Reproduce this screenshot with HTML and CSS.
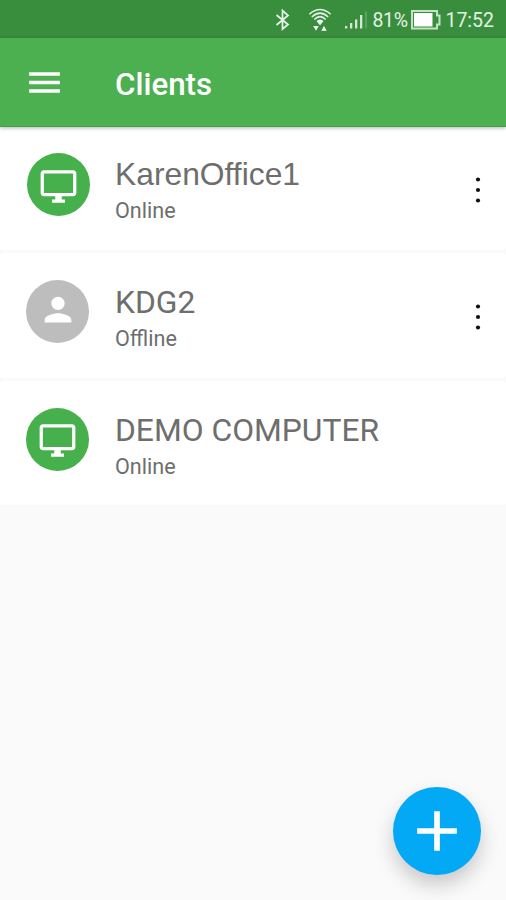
FILE: index.html
```
<!DOCTYPE html>
<html lang="en">
  <head>
    <meta charset="UTF-8" />
    <meta name="viewport" content="width=device-width, initial-scale=1.0" />
    <title>Clients</title>
    <link rel="stylesheet" href="styles.css">
  </head>
  <body>
    <div class="status-bar">
      <svg class="bluetooth" width="16" height="22" viewBox="0 0 16 22">
        <path d="M1.5 6 L13 15.5 L7.5 20 V1.5 L13 6.5 L1.5 16" />
      </svg>
      <svg class="wifi" width="24" height="24" viewBox="0 0 24 24">
        <path d="M1.3 6.3 Q12 -3.3 22.7 6.3 M3.8 9 Q12 1.3 20.2 9 M6.3 11.5 Q12 5.8 17.7 11.5" />
        <path class="solid" d="M8.5 13 Q12 10 15.5 13 L12 17.3 Z M5.3 18 H10.7 L8 22.8 Z M13.3 22.8 H18.7 L16 18 Z" />
      </svg>
      <svg class="signal" width="24" height="20" viewBox="0 0 24 20">
        <path d="M1 16h2.3v2.5H1z M6 13h2.3v5.5H6z M11 9.5h2.3v9H11z M16 5h2.3v13.5H16z" />
        <path class="empty" d="M21 1.5h2v17h-2z" />
      </svg>
      <span class="percent">81%</span>
      <svg class="battery" width="30" height="20" viewBox="0 0 30 20">
        <path class="frame" d="M1 1h25v4.5h2.5v9h-2.5V18.5H1z" />
        <path class="charge" d="M3 3h18.5v13.5H3z" />
      </svg>
      <span class="time">17:52</span>
    </div>

    <header class="app-bar">
      <svg class="menu" width="41" height="41" viewBox="0 0 24 24">
        <path d="M3 18h18v-2H3v2zm0-5h18v-2H3v2zm0-7v2h18V6H3z" />
      </svg>
      <h1>Clients</h1>
    </header>

    <main class="client-list">
      <div class="client first">
        <div class="avatar online">
          <svg width="39" height="39" viewBox="0 0 24 24">
            <path d="M21 2H3c-1.1 0-2 .9-2 2v12c0 1.1.9 2 2 2h7v2H8v2h8v-2h-2v-2h7c1.1 0 2-.9 2-2V4c0-1.1-.9-2-2-2zm0 14H3V4h18v12z" />
          </svg>
        </div>
        <div class="info">
          <div class="name">KarenOffice1</div>
          <div class="status">Online</div>
        </div>
        <svg class="more" width="8" height="28" viewBox="0 0 8 28">
          <circle cx="4" cy="3.5" r="2.1" />
          <circle cx="4" cy="14" r="2.1" />
          <circle cx="4" cy="24.5" r="2.1" />
        </svg>
      </div>

      <div class="client">
        <div class="avatar offline">
          <svg width="40" height="40" viewBox="0 0 24 24">
            <path d="M12 12c2.21 0 4-1.79 4-4s-1.79-4-4-4-4 1.79-4 4 1.79 4 4 4zm0 2c-2.67 0-8 1.34-8 4v1.5h16v-1.5c0-2.66-5.33-4-8-4z" />
          </svg>
        </div>
        <div class="info">
          <div class="name">KDG2</div>
          <div class="status">Offline</div>
        </div>
        <svg class="more" width="8" height="28" viewBox="0 0 8 28">
          <circle cx="4" cy="3.5" r="2.1" />
          <circle cx="4" cy="14" r="2.1" />
          <circle cx="4" cy="24.5" r="2.1" />
        </svg>
      </div>

      <div class="client">
        <div class="avatar online">
          <svg width="39" height="39" viewBox="0 0 24 24">
            <path d="M21 2H3c-1.1 0-2 .9-2 2v12c0 1.1.9 2 2 2h7v2H8v2h8v-2h-2v-2h7c1.1 0 2-.9 2-2V4c0-1.1-.9-2-2-2zm0 14H3V4h18v12z" />
          </svg>
        </div>
        <div class="info">
          <div class="name">DEMO COMPUTER</div>
          <div class="status">Online</div>
        </div>
      </div>
    </main>

    <button class="fab" aria-label="Add client">
      <svg width="68" height="68" viewBox="0 0 24 24">
        <path d="M19 13h-6v6h-2v-6H5v-2h6V5h2v6h6v2z" />
      </svg>
    </button>
  </body>
</html>
```
FILE: styles.css
```
* {
  box-sizing: border-box;
}
body {
  margin: 0;
  height: 100vh;
  overflow: hidden;
  font-family: Roboto, sans-serif;
  background-color: #fafafa;
}
svg {
  display: block;
  flex-shrink: 0;
}

/* status bar */
.status-bar {
  display: flex;
  align-items: center;
  justify-content: flex-end;
  height: 38px;
  padding: 2px 12px 0 0;
  font-size: 19.5px;
  color: #e4f1e4;
  background-color: #388e3c;
}
.bluetooth {
  margin-right: 17px;
  fill: none;
  stroke: #e4f1e4;
  stroke-width: 1.8;
}
.wifi {
  margin-right: 12px;
  fill: none;
  stroke: #e4f1e4;
  stroke-width: 1.5;
}
.wifi .solid {
  fill: #fff;
  stroke: none;
}
.signal {
  margin-right: 4px;
  fill: #d3e8d4;
}
.signal .empty {
  fill: #5aa25d;
}
.percent {
  width: 36px;
  margin-right: 3px;
  letter-spacing: -0.3px;
}
.battery {
  margin-right: 4px;
}
.battery .frame {
  fill: #388e3c;
  stroke: #c5e1c6;
  stroke-width: 2;
}
.battery .charge {
  fill: #fff;
}

/* app bar */
.app-bar {
  position: relative;
  display: flex;
  align-items: center;
  height: 89px;
  padding-left: 24px;
  background-color: #4caf50;
  border-bottom: 1px solid #43a047;
  box-shadow: 0 1px 4px rgba(0, 0, 0, 0.3);
}
.app-bar h1 {
  margin: 5px 0 0 50px;
  font-size: 31.3px;
  font-weight: 500;
  color: #fff;
}
.menu {
  fill: #fff;
}

/* clients */
.client-list {
  display: flex;
  flex-direction: column;
  gap: 3px;
}
.client {
  display: flex;
  align-items: flex-start;
  height: 124.5px;
  padding: 27px 24px 0 26px;
  background-color: #fff;
  border-radius: 3px;
}
.client.first {
  height: 123px;
  padding-top: 26px;
  padding-left: 27px;
}
.avatar {
  display: flex;
  align-items: center;
  justify-content: center;
  width: 63px;
  height: 63px;
  border-radius: 50%;
  background-color: #bdbdbd;
}
.avatar.online {
  padding-top: 3px;
  background-color: #46b04c;
}
.avatar.offline {
  padding-bottom: 3px;
}
.avatar svg {
  fill: #fff;
}
.info {
  flex: 1;
  margin-left: 26px;
  color: #6e6e6e;
}
.first .info {
  margin-left: 25px;
}
.name {
  margin-top: 3px;
  font-size: 31.8px;
  line-height: 38px;
  white-space: nowrap;
}
.first .name {
  margin-top: 2px;
  font-family: "Liberation Sans", Arial, sans-serif;
}
.status {
  margin-top: 6px;
  font-size: 21.6px;
  line-height: 24px;
}
.more {
  margin-top: 23px;
  fill: #111;
}

/* add button */
.fab {
  position: absolute;
  right: 25px;
  bottom: 25px;
  display: flex;
  align-items: center;
  justify-content: center;
  width: 88px;
  height: 88px;
  padding: 0;
  border: none;
  border-radius: 50%;
  background-color: #03a9f4;
  box-shadow: 0 10px 20px rgba(0, 0, 0, 0.2);
}
.fab svg {
  fill: #fff;
}
```
